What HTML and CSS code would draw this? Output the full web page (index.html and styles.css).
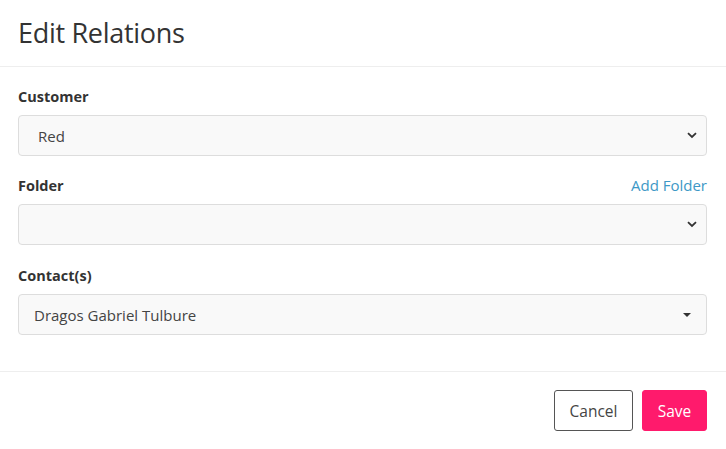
FILE: index.html
```html
<!DOCTYPE html>
<html>
<head>
<meta charset="utf-8">
<link rel="stylesheet" href="styles.css">
</head>
<body>
<div class="modal">
  <div class="modal-header">
    <h1 class="title">Edit Relations</h1>
  </div>
  <div class="modal-body">
    <div class="field">
      <div class="label-row"><label class="label">Customer</label></div>
      <div class="select">
        <span class="value value-native">Red</span>
        <svg class="chev" width="10" height="7" viewBox="0 0 10 7"><path d="M1 1.2 L5 5 L9 1.2" fill="none" stroke="#333" stroke-width="1.8"/></svg>
      </div>
    </div>
    <div class="field">
      <div class="label-row"><label class="label">Folder</label><a class="link">Add Folder</a></div>
      <div class="select">
        <span class="value"></span>
        <svg class="chev" width="10" height="7" viewBox="0 0 10 7"><path d="M1 1.2 L5 5 L9 1.2" fill="none" stroke="#333" stroke-width="1.8"/></svg>
      </div>
    </div>
    <div class="field">
      <div class="label-row"><label class="label">Contact(s)</label></div>
      <div class="select">
        <span class="value">Dragos Gabriel Tulbure</span>
        <span class="caret"></span>
      </div>
    </div>
  </div>
  <div class="modal-footer">
    <button class="btn btn-cancel">Cancel</button>
    <button class="btn btn-save">Save</button>
  </div>
</div>
</body>
</html>
```
FILE: styles.css
```css
* { box-sizing: border-box; }
html, body { margin: 0; padding: 0; background: #fff; }
body { font-family: "Open Sans", "Liberation Sans", sans-serif; color: #333; width: 726px; height: 449px; overflow: hidden; }
.modal { width: 726px; }
.modal-header { height: 67px; padding: 0 18px; border-bottom: 1px solid #eee; display: flex; align-items: center; }
.title { margin: 0; font-size: 27px; font-weight: 400; color: #333; letter-spacing: -0.3px; padding-bottom: 1px; }
.modal-body { padding: 18px 19px 36px 18px; border-bottom: 1px solid #eee; }
.field { margin-bottom: 18px; }
.field:nth-child(2) { margin-bottom: 19px; }
.field:last-child { margin-bottom: 0; }
.label-row { display: flex; justify-content: space-between; align-items: center; height: 22px; margin-bottom: 8px; }
.label { font-size: 14.5px; font-weight: 700; color: #333; }
.link { font-size: 15px; color: #3d98c6; }
.select { height: 41px; border: 1px solid #ddd; border-radius: 4px; background: #f9f9f9; display: flex; align-items: center; justify-content: space-between; padding: 0 8px 0 15px; }
.field:nth-child(2) .select, .field:last-child .select { height: 41px; }
.value { font-size: 15px; color: #444; }
.value-native { padding-left: 4px; }
.chev { margin-right: 1px; }
.caret { width: 0; height: 0; border-left: 4px solid transparent; border-right: 4px solid transparent; border-top: 4px solid #333; margin-right: 7px; }
.modal-footer { padding: 18px 19px 18px 18px; display: flex; justify-content: flex-end; gap: 9px; }
.btn { height: 41px; border-radius: 3px; font-family: inherit; font-size: 15.5px; padding: 0; cursor: pointer; }
.btn-cancel { background: #fff; border: 1px solid #555; color: #444; width: 79px; }
.btn-save { background: #ff1a6c; border: 1px solid #ff1a6c; color: #fff; width: 65px; }
```
